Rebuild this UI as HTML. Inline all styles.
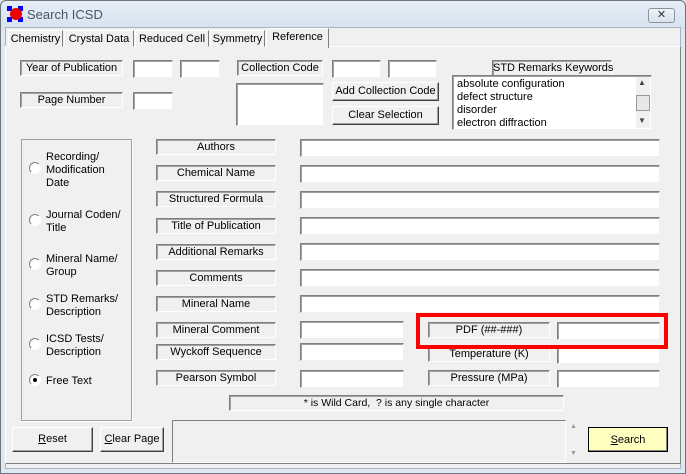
<!DOCTYPE html>
<html><head><style>
*{box-sizing:border-box}
body{margin:0;width:686px;height:474px;overflow:hidden;background:#dfe8f1;font-family:"Liberation Sans",sans-serif;font-size:11px;color:#000}
.win{position:absolute;left:0;top:0;width:686px;height:474px;border:1px solid #6d747c;border-radius:6px 6px 0 0;background:linear-gradient(#e6eef7,#d6e2ee 28px,#dfe8f1 28px)}
.cl{position:absolute;left:5px;top:27px;width:676px;height:442px;background:#f0f0f0;border:1px solid #a9b3bd}
.a{position:absolute}
.lbl{position:absolute;height:16px;border-top:1px solid #808080;border-left:1px solid #808080;border-right:1px solid #fff;border-bottom:1px solid #fff;box-shadow:inset 1px 1px 0 #a0a0a0;text-align:center;line-height:15px;white-space:nowrap}
.in{position:absolute;height:18px;background:#fff;border-top:1px solid #808080;border-left:1px solid #808080;border-right:1px solid #f0f0f0;border-bottom:1px solid #f0f0f0;box-shadow:inset 1px 1px 0 #a0a0a0}
.btn{position:absolute;background:#f0f0f0;border:1px solid;border-color:#fff #404040 #404040 #fff;box-shadow:inset -1px -1px 0 #a0a0a0;text-align:center;white-space:nowrap}
.tab{position:absolute;top:30px;height:17px;border:1px solid;border-color:#fff #808080 transparent #fff;line-height:16px;text-align:center;white-space:nowrap;background:#f0f0f0}
.rad{position:absolute;width:12px;height:12px;border-radius:50%;background:#fff;border:1px solid;border-color:#808080 #fff #fff #808080}
.rt{position:absolute;line-height:13px}
</style></head><body>
<div class="win"></div>
<div class="cl"></div>
<div class="a" style="left:7px;top:6px;width:16px;height:16px">
<svg width="16" height="16"><rect x="0" y="0" width="5" height="5" fill="#00f"/><rect x="11" y="0" width="5" height="5" fill="#00f"/><rect x="0" y="11" width="5" height="5" fill="#00f"/><rect x="11" y="11" width="5" height="5" fill="#00f"/><circle cx="9" cy="8" r="6" fill="#e00"/></svg></div>
<div class="a" style="left:27px;top:7px;font-size:13px;color:#4a5563">Search ICSD</div>
<div class="a" style="left:648px;top:8px;width:27px;height:15px;border:1px solid #8a949e;border-radius:3px;background:linear-gradient(#eef3f8,#d9e2ea);text-align:center;font-size:11px;line-height:13px;color:#333">✕</div>
<div class="a" style="left:5px;top:46px;width:676px;height:418px;border:1px solid;border-color:#fff #808080 #808080 #fff;background:#f0f0f0"></div>
<div class="tab" style="left:8px;width:55px">Chemistry</div>
<div class="tab" style="left:64px;width:70px">Crystal Data</div>
<div class="tab" style="left:135px;width:74px">Reduced Cell</div>
<div class="tab" style="left:210px;width:55px">Symmetry</div>
<div class="tab" style="left:266px;top:28px;height:20px;width:63px;border-bottom:none;line-height:16px">Reference</div>

<div class="lbl" style="left:20px;top:60px;width:103px">Year of Publication</div>
<div class="in" style="left:133px;top:60px;width:40px"></div>
<div class="in" style="left:180px;top:60px;width:40px"></div>
<div class="lbl" style="left:237px;top:60px;width:86px">Collection Code</div>
<div class="in" style="left:332px;top:60px;width:49px"></div>
<div class="in" style="left:388px;top:60px;width:49px"></div>
<div class="lbl" style="left:20px;top:92px;width:103px">Page Number</div>
<div class="in" style="left:133px;top:92px;width:40px"></div>
<div class="in" style="left:236px;top:83px;width:88px;height:43px"></div>
<div class="btn" style="left:332px;top:82px;width:107px;height:19px;line-height:17px">Add Collection Code</div>
<div class="btn" style="left:332px;top:106px;width:107px;height:19px;line-height:17px">Clear Selection</div>
<div class="lbl" style="left:492px;top:60px;width:120px">STD Remarks Keywords</div>
<div class="in" style="left:452px;top:75px;width:200px;height:55px;padding:2px 0 0 4px;line-height:13px;white-space:nowrap">absolute configuration<br>defect structure<br>disorder<br>electron diffraction</div>
<div class="a" style="left:636px;top:77px;width:14px;height:51px;background:#f0f0f0"></div>
<div class="a" style="left:638px;top:78px;font-size:8px;color:#444">▲</div>
<div class="a" style="left:636px;top:95px;width:14px;height:16px;border:1px solid #999;background:#e8e8e8"></div>
<div class="a" style="left:638px;top:116px;font-size:8px;color:#444">▼</div>

<div class="a" style="left:21px;top:139px;width:111px;height:282px;border:1px solid #a0a0a0;box-shadow:1px 1px 0 #fff"></div>
<div class="rad" style="left:29px;top:162px"></div><div class="rt" style="left:46px;top:151px">Recording/<br>Modification<br>Date</div>
<div class="rad" style="left:29px;top:214px"></div><div class="rt" style="left:46px;top:209px">Journal Coden/<br>Title</div>
<div class="rad" style="left:29px;top:258px"></div><div class="rt" style="left:46px;top:253px">Mineral Name/<br>Group</div>
<div class="rad" style="left:29px;top:298px"></div><div class="rt" style="left:46px;top:293px">STD Remarks/<br>Description</div>
<div class="rad" style="left:29px;top:338px"></div><div class="rt" style="left:46px;top:333px">ICSD Tests/<br>Description</div>
<div class="rad" style="left:29px;top:374px"><div style="position:absolute;left:3px;top:3px;width:4px;height:4px;border-radius:50%;background:#000"></div></div><div class="rt" style="left:46px;top:375px">Free Text</div>

<div class="lbl" style="left:156px;top:139px;width:120px">Authors</div>
<div class="lbl" style="left:156px;top:165px;width:120px">Chemical Name</div>
<div class="lbl" style="left:156px;top:191px;width:120px">Structured Formula</div>
<div class="lbl" style="left:156px;top:218px;width:120px">Title of Publication</div>
<div class="lbl" style="left:156px;top:244px;width:120px">Additional Remarks</div>
<div class="lbl" style="left:156px;top:270px;width:120px">Comments</div>
<div class="lbl" style="left:156px;top:296px;width:120px">Mineral Name</div>
<div class="lbl" style="left:156px;top:322px;width:120px">Mineral Comment</div>
<div class="lbl" style="left:156px;top:344px;width:120px">Wyckoff Sequence</div>
<div class="lbl" style="left:156px;top:370px;width:120px">Pearson Symbol</div>
<div class="in" style="left:300px;top:139px;width:360px"></div>
<div class="in" style="left:300px;top:165px;width:360px"></div>
<div class="in" style="left:300px;top:191px;width:360px"></div>
<div class="in" style="left:300px;top:217px;width:360px"></div>
<div class="in" style="left:300px;top:243px;width:360px"></div>
<div class="in" style="left:300px;top:269px;width:360px"></div>
<div class="in" style="left:300px;top:295px;width:360px"></div>
<div class="in" style="left:300px;top:321px;width:104px"></div>
<div class="in" style="left:300px;top:343px;width:104px"></div>
<div class="in" style="left:300px;top:370px;width:104px"></div>
<div class="lbl" style="left:428px;top:322px;width:122px">PDF (##-###)</div>
<div class="lbl" style="left:428px;top:346px;width:122px">Temperature (K)</div>
<div class="lbl" style="left:428px;top:370px;width:122px">Pressure (MPa)</div>
<div class="in" style="left:557px;top:322px;width:103px"></div>
<div class="in" style="left:557px;top:346px;width:103px"></div>
<div class="in" style="left:557px;top:370px;width:103px"></div>
<div class="a" style="left:416px;top:313px;width:252px;height:36px;border:4px solid #f00"></div>
<div class="lbl" style="left:229px;top:395px;width:335px;font-size:10.5px">* is Wild Card,&nbsp; ? is any single character</div>

<div class="btn" style="left:12px;top:427px;width:81px;height:25px;line-height:23px"><u>R</u>eset</div>
<div class="btn" style="left:100px;top:427px;width:64px;height:25px;line-height:23px"><u>C</u>lear Page</div>
<div class="a" style="left:172px;top:420px;width:394px;height:43px;border:1px solid;border-color:#808080 #fff #fff #808080"></div>
<div class="a" style="left:570px;top:423px;font-size:7px;color:#999">▲</div>
<div class="a" style="left:570px;top:450px;font-size:7px;color:#999">▼</div>
<div class="a" style="left:588px;top:427px;width:80px;height:25px;background:#ffffc0;border:1px solid #000;box-shadow:inset -1px -1px 0 #808080;text-align:center;line-height:24px"><u>S</u>earch</div>
</body></html>
